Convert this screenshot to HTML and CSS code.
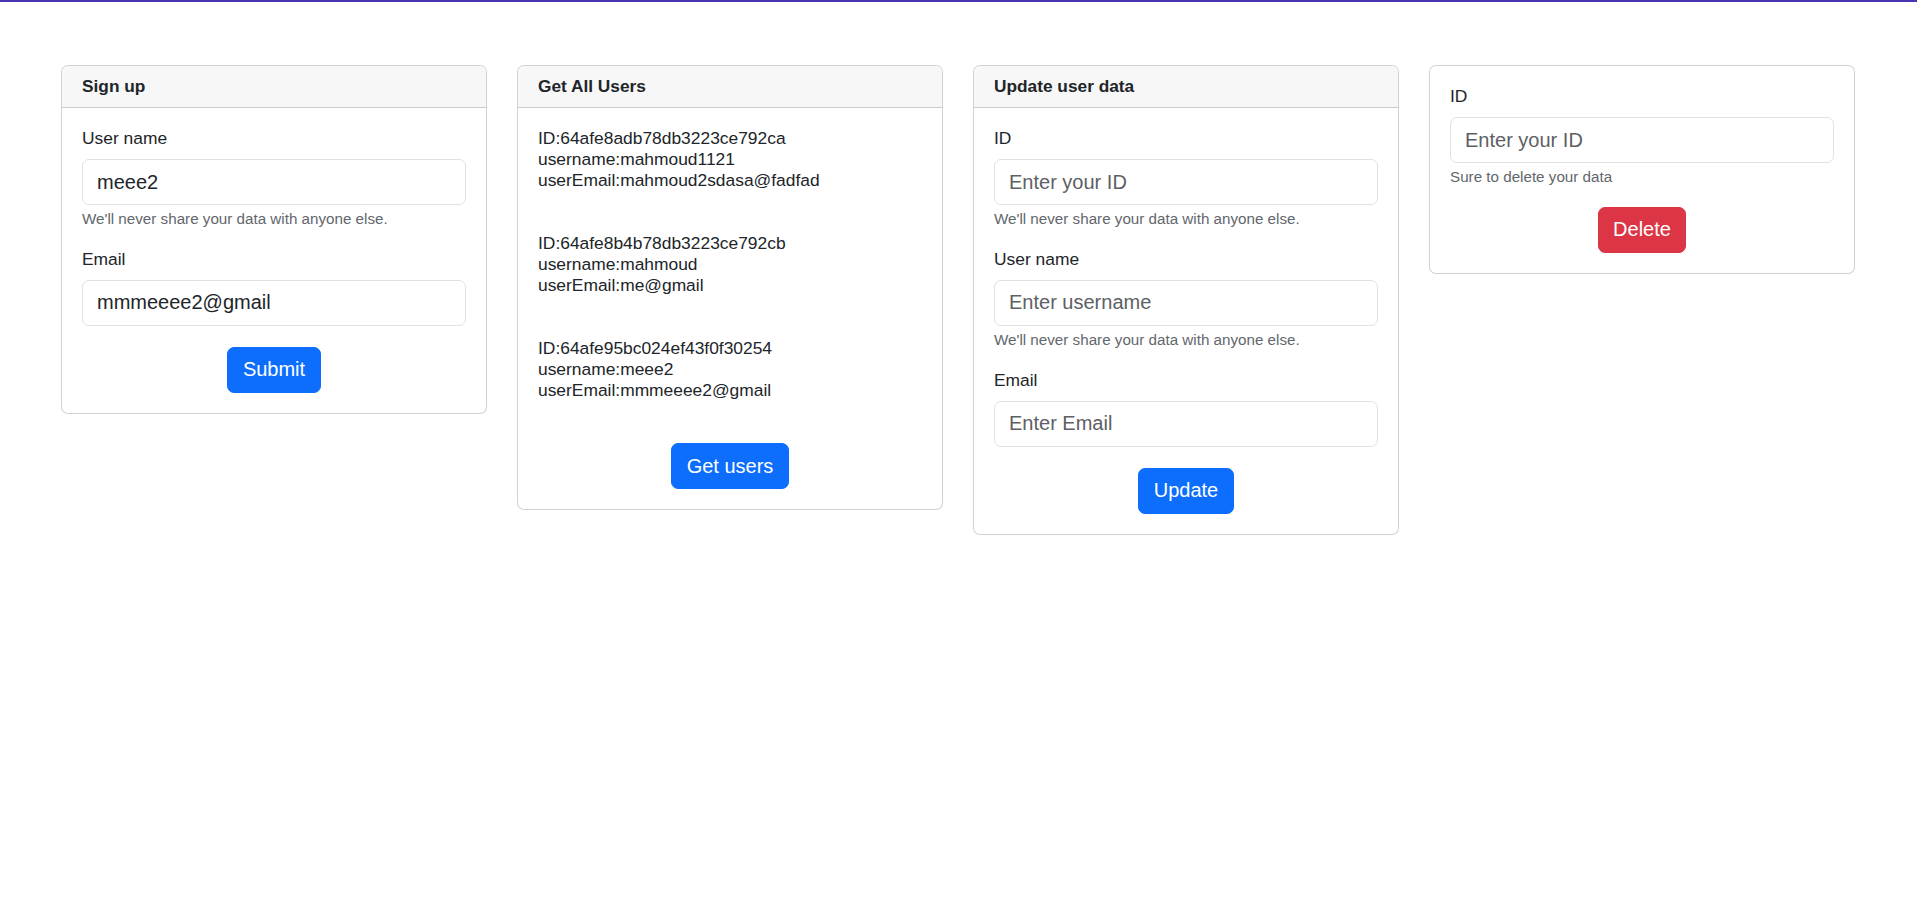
FILE: index.html
```html
<!DOCTYPE html>
<html lang="en">
<head>
<meta charset="utf-8">
<title>Users</title>
<link rel="stylesheet" href="styles.css">
</head>
<body>
<div class="topbar"></div>
<main class="cards">
  <section class="card">
    <div class="card-header">Sign up</div>
    <div class="card-body">
      <div class="group">
        <label class="label">User name</label>
        <input class="input" type="text" value="meee2" placeholder="Enter username">
        <div class="help">We'll never share your data with anyone else.</div>
      </div>
      <div class="group group-last">
        <label class="label">Email</label>
        <input class="input" type="text" value="mmmeeee2@gmail" placeholder="Enter Email">
      </div>
      <div class="actions"><button class="btn btn-primary">Submit</button></div>
    </div>
  </section>

  <section class="card">
    <div class="card-header">Get All Users</div>
    <div class="card-body">
      <div class="users">
        <div class="user">ID:64afe8adb78db3223ce792ca<br>username:mahmoud1121<br>userEmail:mahmoud2sdasa@fadfad</div>
        <div class="user">ID:64afe8b4b78db3223ce792cb<br>username:mahmoud<br>userEmail:me@gmail</div>
        <div class="user">ID:64afe95bc024ef43f0f30254<br>username:meee2<br>userEmail:mmmeeee2@gmail</div>
      </div>
      <div class="actions"><button class="btn btn-primary">Get users</button></div>
    </div>
  </section>

  <section class="card">
    <div class="card-header">Update user data</div>
    <div class="card-body">
      <div class="group">
        <label class="label">ID</label>
        <input class="input" type="text" placeholder="Enter your ID">
        <div class="help">We'll never share your data with anyone else.</div>
      </div>
      <div class="group">
        <label class="label">User name</label>
        <input class="input" type="text" placeholder="Enter username">
        <div class="help">We'll never share your data with anyone else.</div>
      </div>
      <div class="group group-last">
        <label class="label">Email</label>
        <input class="input" type="text" placeholder="Enter Email">
      </div>
      <div class="actions"><button class="btn btn-primary">Update</button></div>
    </div>
  </section>

  <section class="card">
    <div class="card-body">
      <div class="group group-help-last">
        <label class="label">ID</label>
        <input class="input" type="text" placeholder="Enter your ID">
        <div class="help">Sure to delete your data</div>
      </div>
      <div class="actions"><button class="btn btn-danger">Delete</button></div>
    </div>
  </section>
</main>
</body>
</html>
```

FILE: styles.css
```css
* {
  box-sizing: border-box;
}

body {
  margin: 0;
  background: #ffffff;
  color: #212529;
  font-family: "Liberation Sans", Arial, sans-serif;
  font-size: 17.4px;
}

.topbar {
  height: 2px;
  background: #4636b2;
}

.cards {
  display: flex;
  justify-content: flex-start;
  align-items: flex-start;
  gap: 30px;
  padding-top: 63px;
  padding-left: 61px;
}

.card {
  width: 426px;
  flex: 0 0 426px;
  border: 1px solid rgba(0, 0, 0, 0.175);
  border-radius: 7px;
  background: #ffffff;
  overflow: hidden;
}

.card-header {
  height: 42px;
  line-height: 41px;
  padding: 0 20px;
  font-weight: 700;
  font-size: 17.3px;
  background: #f7f7f7;
  border-bottom: 1px solid rgba(0, 0, 0, 0.175);
}

.card-body {
  padding: 17px 20px 20px;
}

.group {
  margin-bottom: 15px;
}

.group-last {
  margin-bottom: 21px;
}

.group-help-last {
  margin-bottom: 18px;
}

.label {
  display: block;
  line-height: 26px;
  margin-bottom: 8px;
}

.input {
  display: block;
  width: 100%;
  height: 46px;
  padding: 0 14px;
  border: 1px solid #dee2e6;
  border-radius: 7px;
  font-family: "Liberation Sans", Arial, sans-serif;
  font-size: 20px;
  color: #212529;
  background: #ffffff;
  outline: none;
}

.input::placeholder {
  color: #5d6064;
  opacity: 1;
}

.help {
  margin-top: 3px;
  font-size: 15.2px;
  line-height: 22.8px;
  color: #63676c;
}

.users {
  margin-top: 3px;
  line-height: 21px;
}

.user {
  height: 105px;
}

.actions {
  display: flex;
  justify-content: center;
}

.btn {
  height: 46px;
  padding: 0 14.5px;
  border: 1px solid transparent;
  border-radius: 7px;
  font-family: "Liberation Sans", Arial, sans-serif;
  font-size: 20px;
  color: #ffffff;
  cursor: pointer;
}

.btn-primary {
  background: #0d6efd;
  border-color: #0d6efd;
}

.btn-danger {
  background: #dc3545;
  border-color: #dc3545;
}
```
